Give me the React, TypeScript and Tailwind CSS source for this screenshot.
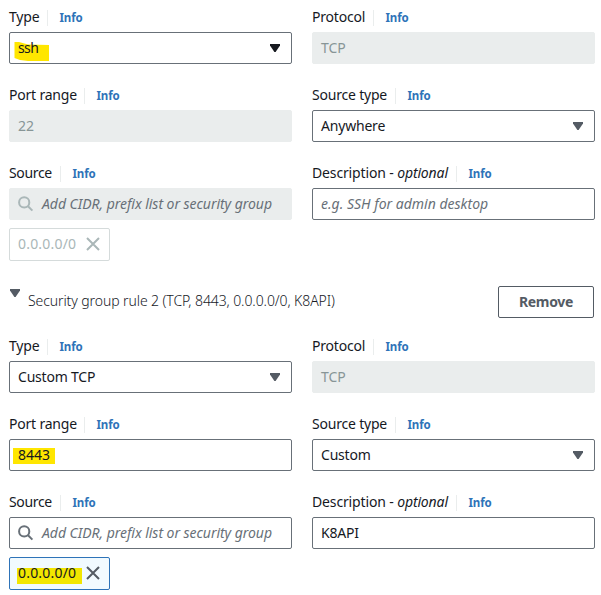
import type { ReactNode } from "react";

function Label({ children, width, tracking = "tracking-[-0.2px]" }: { children: ReactNode; width: string; tracking?: string }) {
  return (
    <div className="mb-[6px] flex h-4 items-center whitespace-nowrap leading-4">
      <span className={`${width} ${tracking} relative -top-px shrink-0`}>{children}</span>
      <span className="h-4 w-px bg-[#eaeded]" />
      <a className="ml-[11.5px] text-[11.5px] font-bold tracking-[-0.1px] text-[#2e73b8]">Info</a>
    </div>
  );
}

function Caret({ color = "#545b64" }: { color?: string }) {
  return (
    <svg width="10" height="8" viewBox="0 0 10 8" className="shrink-0">
      <path d="M0 0H10V1.4L5.6 8H4.4L0 1.4Z" fill={color} />
    </svg>
  );
}

function Box({ children, disabled = false }: { children: ReactNode; disabled?: boolean }) {
  return (
    <div
      className={`flex h-8 items-center whitespace-nowrap rounded-[2px] border px-2 leading-5 ${
        disabled ? "border-[#eaeded] bg-[#eaeded] text-[#879596]" : "border-[#687078] bg-white"
      }`}
    >
      {children}
    </div>
  );
}

function Select({ children, dark = false }: { children: ReactNode; dark?: boolean }) {
  return (
    <Box>
      <div className="flex flex-1 items-center justify-between pr-[3px] tracking-[-0.2px]">
        {children}
        <Caret color={dark ? "#16191f" : "#545b64"} />
      </div>
    </Box>
  );
}

function Search({ disabled = false }: { disabled?: boolean }) {
  return (
    <Box disabled={disabled}>
      <svg width="16" height="16" viewBox="0 0 16 16" fill="none" stroke={disabled ? "#aab7b8" : "#687078"} strokeWidth="2" className="shrink-0">
        <circle cx="6.2" cy="6.4" r="5.1" />
        <path d="M10 10.2L14.4 14.6" />
      </svg>
      <span className="ml-2 italic tracking-[-0.04px] text-[#687078]">Add CIDR, prefix list or security group</span>
    </Box>
  );
}

function Token({ disabled = false }: { disabled?: boolean }) {
  return (
    <div
      className={`mt-2 flex h-[33px] w-[101px] items-center rounded-[2px] border pl-2 leading-5 ${
        disabled ? "border-[#d5dbdb] bg-white text-[#aab7b8]" : "border-[#2e73b8] bg-[#f1faff]"
      }`}
    >
      <span className="relative w-[58px] shrink-0 tracking-[0.2px]">
        {!disabled && <span className="absolute -left-px top-[4.5px] h-4 w-[65px] bg-[#f2e600]" />}
        <span className="relative -top-px">0.0.0.0/0</span>
      </span>
      <svg width="14" height="14" viewBox="0 0 14 14" className="mb-[2px] ml-[10px]" fill="none" stroke={disabled ? "#aab7b8" : "#545b64"} strokeWidth="2">
        <path d="M1 1L13 13M13 1L1 13" />
      </svg>
    </div>
  );
}

function Row({ children }: { children: ReactNode }) {
  return <div className="grid grid-cols-[283px_283px] gap-x-5">{children}</div>;
}

function Rule({ first = false }: { first?: boolean }) {
  return (
    <div className="flex flex-col gap-6">
      <Row>
        <div>
          <Label width="w-[38px]">Type</Label>
          <Select dark={first}>
            {first ? (
              <span className="relative tracking-[-0.6px]">
                <svg className="absolute -left-[4px] top-[4px]" width="35" height="20" viewBox="0 0 35 20">
                  <path d="M0.5 0H5L14 2.5L35 3V19H14L6 18L0.5 16Z" fill="#ffe600" />
                </svg>
                <span className="relative">ssh</span>
              </span>
            ) : (
              <span>Custom TCP</span>
            )}
          </Select>
        </div>
        <div>
          <Label width="w-[61px]">Protocol</Label>
          <Box disabled>TCP</Box>
        </div>
      </Row>
      <Row>
        <div>
          <Label width="w-[75px]">Port range</Label>
          {first ? (
            <Box disabled>22</Box>
          ) : (
            <Box>
              <span className="relative">
                <span className="absolute -left-[5px] top-[3px] h-4 w-[42px] bg-[#ffe600]" />
                <span className="relative">8443</span>
              </span>
            </Box>
          )}
        </div>
        <div>
          <Label width="w-[83px]">Source type</Label>
          <Select>
            <span>{first ? "Anywhere" : "Custom"}</span>
          </Select>
        </div>
      </Row>
      <Row>
        <div>
          <Label width="w-[51px]" tracking="tracking-[-0.35px]">Source</Label>
          <Search disabled={first} />
          <Token disabled={first} />
        </div>
        <div>
          <Label width="w-[144px]" tracking="tracking-[-0.14px]">
            Description - <i>optional</i>
          </Label>
          <Box>
            {first ? <span className="italic text-[#687078]">e.g. SSH for admin desktop</span> : <span className="tracking-[-0.2px]">K8API</span>}
          </Box>
        </div>
      </Row>
    </div>
  );
}

export default function App() {
  return (
    <main className="h-[595px] w-[601px] overflow-hidden bg-white pl-[9px] pt-[10px] font-['Noto_Sans',sans-serif] text-[14px] text-[#16191f]">
      <Rule first />
      <div className="mb-[21px] mt-[25px] flex h-8 w-[585px] items-center">
        <div className="ml-px mt-[3px] self-start">
          <Caret />
        </div>
        <span className="mb-[2px] ml-2 flex-1 whitespace-nowrap font-light leading-5 tracking-[-0.09px]">
          Security group rule 2 (TCP, 8443, 0.0.0.0/0, K8API)
        </span>
        <button className="h-8 w-24 rounded-[2px] border border-[#545b64] pb-[2px] font-bold tracking-[-0.3px] text-[#545b64]">Remove</button>
      </div>
      <Rule />
    </main>
  );
}
